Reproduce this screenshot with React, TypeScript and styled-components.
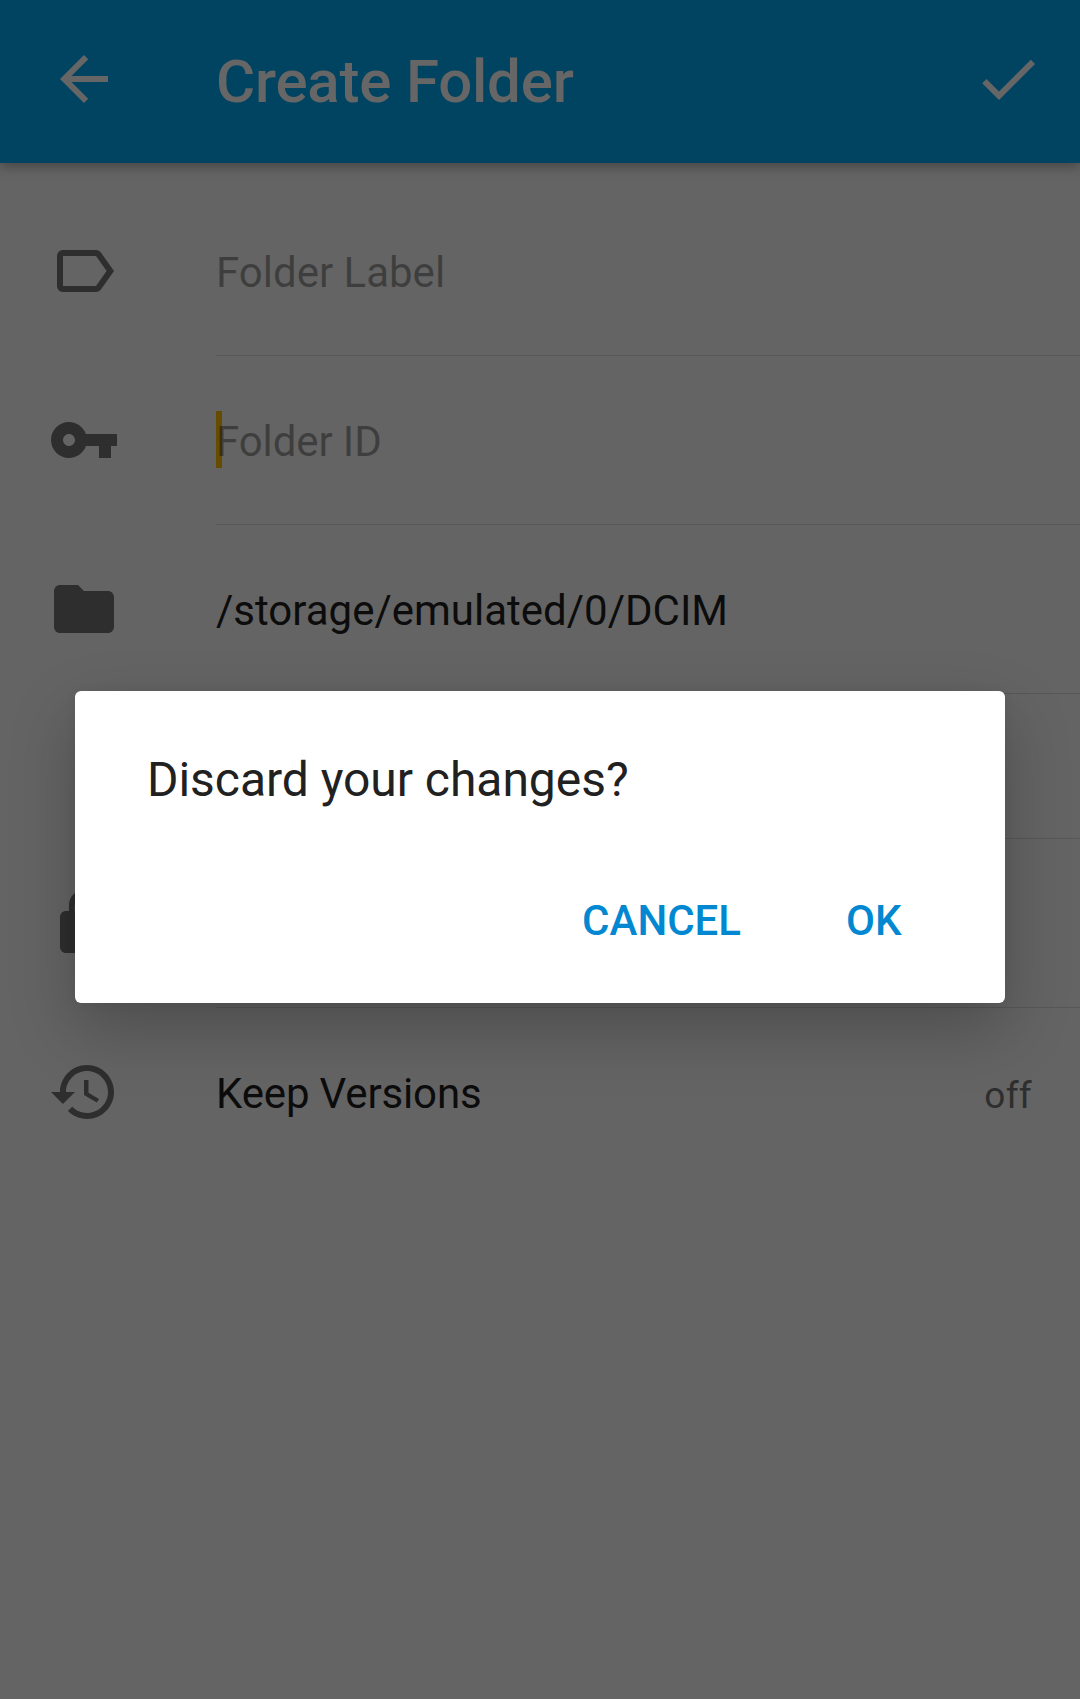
import React from 'react';
import styled, { createGlobalStyle } from 'styled-components';

const Global = createGlobalStyle`
  * { box-sizing: border-box; }
  body { margin: 0; background: #646464; font-family: Roboto, "Liberation Sans", sans-serif; }
`;
const Screen = styled.main`
  position: relative; width: 1080px; height: 1699px; overflow: hidden; background: #646464;
`;
const AppBar = styled.header`
  position: relative; display: flex; align-items: flex-start; height: 163px; padding: 43px 36px 0 48px;
  background: #004461; color: #666; box-shadow: 0 3px 12px rgba(0,0,0,.34);
`;
const Title = styled.h1`
  flex: 1; margin: 3px 0 0; padding-left: 96px; font-size: 60px; font-weight: 500; line-height: 72px;
  letter-spacing: -0.2px; white-space: nowrap;
`;
const Icon = styled.svg`
  display: block; flex: none; width: 72px; height: 72px; fill: currentColor;
`;
const Rows = styled.div`padding-top: 24px;`;
const Row = styled.div<{ $h: number }>`
  display: flex; height: ${p => p.$h}px; padding-left: 48px; color: #2e2e2e;
`;
const IconCell = styled.div`display: flex; align-items: center; width: 168px; flex: none; padding-bottom: 1px;`;
const Field = styled.div<{ $last?: boolean }>`
  display: flex; flex: 1; align-items: center; justify-content: space-between; padding: 4px 48px 0 0;
  border-bottom: 1px solid ${p => (p.$last ? 'transparent' : '#575757')};
`;
const Label = styled.span<{ $hint?: boolean; $spacing?: number }>`
  position: relative; z-index: 0; font-size: 42px; line-height: 56px; letter-spacing: ${p => p.$spacing ?? 0}px;
  color: ${p => (p.$hint ? 'rgba(0,0,0,.38)' : '#0c0c0c')}; white-space: nowrap;
`;
const Caret = styled.i`
  position: absolute; z-index: -1; left: 0; top: -3px; width: 6px; height: 57px; background: #664c00;
`;
const Value = styled.span`
  padding-top: 3px; font-size: 37px; line-height: 56px; letter-spacing: 0.3px; color: #2e2e2e; font-variant-ligatures: none;
`;
const Dialog = styled.section`
  position: absolute; left: 75px; top: 691px; width: 930px; height: 312px; padding: 55px 72px 0;
  display: flex; flex-direction: column; border-radius: 6px; background: #fff;
  box-shadow: 0 26px 66px rgba(0,0,0,.23), 0 0 12px rgba(0,0,0,.05);
`;
const Message = styled.p`margin: 0; font-size: 48px; line-height: 68px; letter-spacing: -0.04px; color: #212121;`;
const Actions = styled.div`display: flex; justify-content: flex-end; gap: 105px; margin-top: 75px; padding-right: 31.5px;`;
const Action = styled.button`
  border: 0; padding: 0; background: none; font: 500 42px/64px Roboto, sans-serif; color: #0288d1;
`;
const paths = {
  back: 'M20 11H7.83l5.59-5.59L12 4l-8 8 8 8 1.41-1.41L7.83 13H20v-2z',
  check: 'M9 16.17L4.83 12l-1.42 1.41L9 19 21 7l-1.41-1.41z',
  label: 'M17.63 5.84C17.27 5.33 16.67 5 16 5L5 5.01C3.9 5.01 3 5.9 3 7v10c0 1.1.9 1.99 2 1.99L16 19c.67 0 1.27-.33 1.63-.84L22 12l-4.37-6.16zM16 17H5V7h11l3.55 5L16 17z',
  key: 'M12.65 10C11.83 7.67 9.61 6 7 6c-3.31 0-6 2.69-6 6s2.69 6 6 6c2.61 0 4.83-1.67 5.65-4H17v4h4v-4h2v-4H12.65zM7 14c-1.1 0-2-.9-2-2s.9-2 2-2 2 .9 2 2-.9 2-2 2z',
  folder: 'M10 4H4c-1.1 0-1.99.9-1.99 2L2 18c0 1.1.9 2 2 2h16c1.1 0 2-.9 2-2V8c0-1.1-.9-2-2-2h-8l-2-2z',
  lock: 'M18 8h-1V6c0-2.76-2.24-5-5-5S7 3.24 7 6v2H6c-1.1 0-2 .9-2 2v10c0 1.1.9 2 2 2h12c1.1 0 2-.9 2-2V10c0-1.1-.9-2-2-2zm-6 9c-1.1 0-2-.9-2-2s.9-2 2-2 2 .9 2 2-.9 2-2 2zm3.1-9H8.9V6c0-1.71 1.39-3.1 3.1-3.1 1.71 0 3.1 1.39 3.1 3.1v2z',
  history: 'M13 3c-4.97 0-9 4.03-9 9H1l3.89 3.89.07.14L9 12H6c0-3.87 3.13-7 7-7s7 3.13 7 7-3.13 7-7 7c-1.93 0-3.68-.79-4.94-2.06l-1.42 1.42C8.27 19.99 10.51 21 13 21c4.97 0 9-4.03 9-9s-4.03-9-9-9zm-1 5v5l4.28 2.54.72-1.21-3.5-2.08V8H12z',
};
const Glyph = ({ name }: { name: keyof typeof paths }) => (
  <Icon viewBox="0 0 24 24"><path d={paths[name]} /></Icon>
);

export default function App() {
  return (
    <Screen>
      <Global />
      <AppBar><Glyph name="back" /><Title>Create Folder</Title><Glyph name="check" /></AppBar>
      <Rows>
        <Row $h={169}><IconCell><Glyph name="label" /></IconCell><Field><Label $hint>Folder Label</Label></Field></Row>
        <Row $h={169}><IconCell><Glyph name="key" /></IconCell><Field><Label $hint $spacing={-0.1}>Folder ID<Caret /></Label></Field></Row>
        <Row $h={169}><IconCell><Glyph name="folder" /></IconCell><Field><Label>/storage/emulated/0/DCIM</Label></Field></Row>
        <Row $h={145}><IconCell /><Field /></Row>
        <Row $h={169}><IconCell><Glyph name="lock" /></IconCell><Field /></Row>
        <Row $h={169}><IconCell><Glyph name="history" /></IconCell><Field $last><Label $spacing={-0.15}>Keep Versions</Label><Value>off</Value></Field></Row>
      </Rows>
      <Dialog role="dialog">
        <Message>Discard your changes?</Message>
        <Actions><Action>CANCEL</Action><Action>OK</Action></Actions>
      </Dialog>
    </Screen>
  );
}
